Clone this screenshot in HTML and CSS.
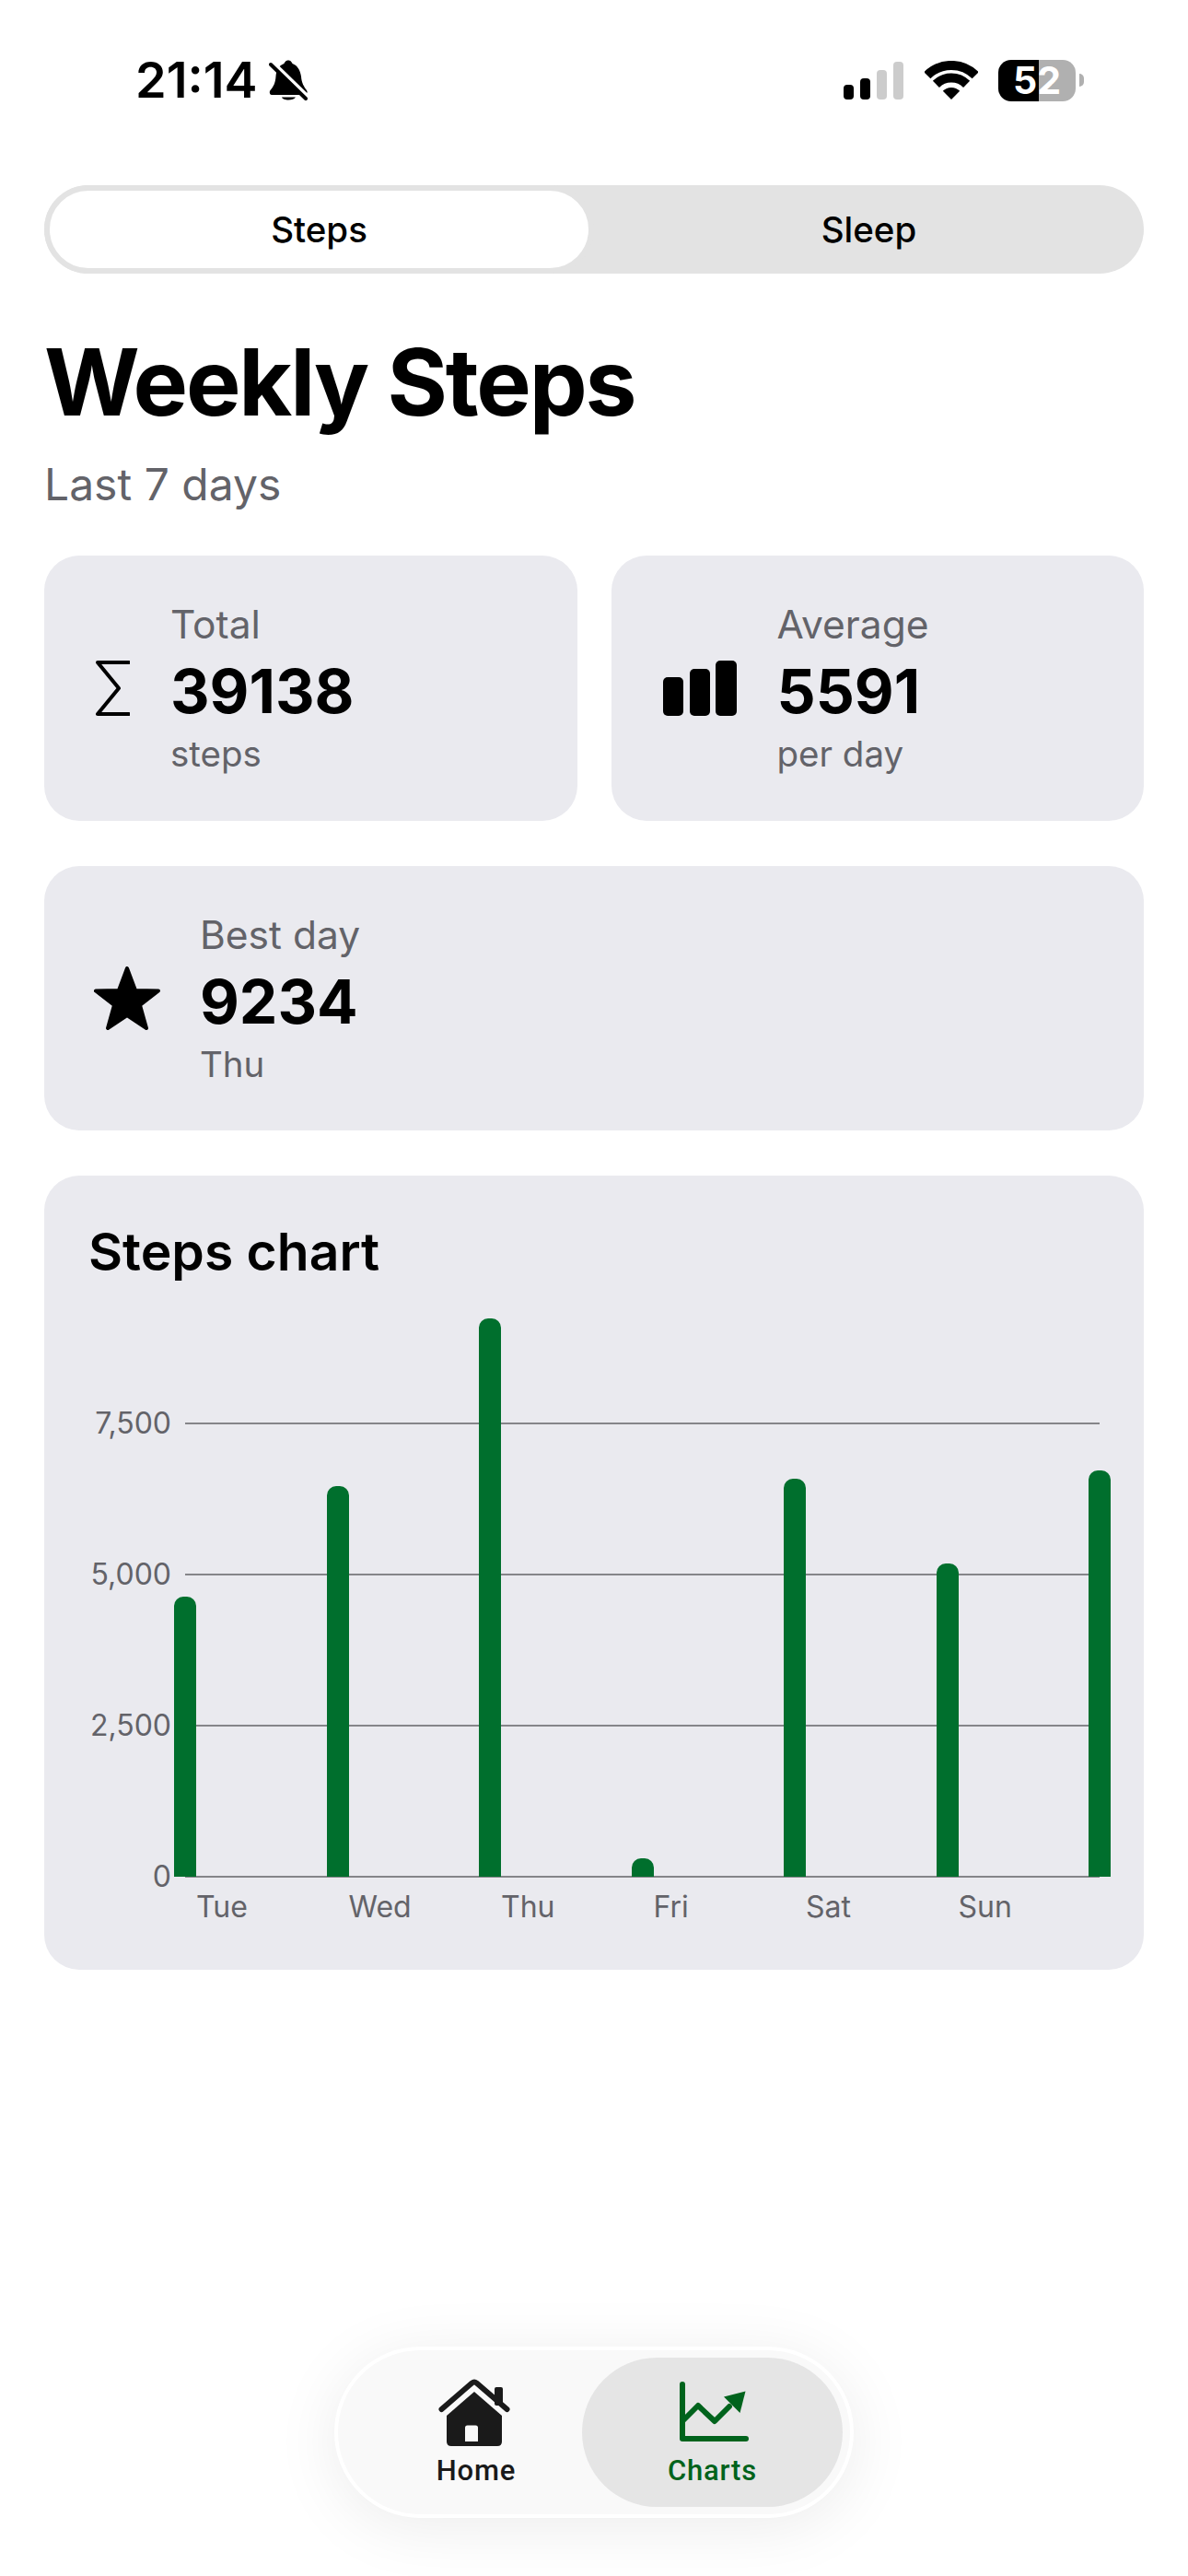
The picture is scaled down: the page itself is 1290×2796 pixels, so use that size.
FILE: index.html
```html
<!DOCTYPE html>
<html lang="en">
<head>
    <meta charset="UTF-8">
    <meta name="viewport" content="width=device-width, initial-scale=1.0">
    <title>Weekly Steps</title>
    <link rel="stylesheet" href="styles.css">
</head>
<body>
    <header class="status">
        <span class="time">21:14</span>
        <svg class="bell" viewBox="0 0 42 46">
            <path d="M21 1.5C24 1.5 25 4 25.5 5C31 7 34 12 35 19C35.5 26 38 30 41 34C42.5 36 41 39 39 39L3 39C1 39 0 36 1.5 34C5 30 7 26 7.5 19C8 12 11 7 16.5 5C17 4 18 1.5 21 1.5Z"/>
            <path d="M14 41.5C15 45.5 27 45.5 29 41.5Z"/>
            <path class="bell-gap" d="M4 4L42 41"/>
            <path class="bell-slash" d="M2 6L40 43"/>
        </svg>
        <div class="status-right">
            <div class="signal">
                <i class="sig sig-1"></i>
                <i class="sig sig-2"></i>
                <i class="sig sig-3 off"></i>
                <i class="sig sig-4 off"></i>
            </div>
            <svg class="wifi" viewBox="0 0 58 42">
                <path class="wifi-arc" d="M2.8 15.8A37 37 0 0 1 55.2 15.8"/>
                <path class="wifi-arc" d="M12.4 25.4A23.5 23.5 0 0 1 45.6 25.4"/>
                <path d="M29 42L19.8 32.8A13 13 0 0 1 38.2 32.8Z"/>
            </svg>
            <div class="battery"><span>52</span></div>
            <i class="battery-cap"></i>
        </div>
    </header>

    <main class="content">
        <div class="segments">
            <div class="segment selected">Steps</div>
            <div class="segment">Sleep</div>
        </div>

        <h1 class="title">Weekly Steps</h1>
        <p class="subtitle">Last 7 days</p>

        <div class="stat-row">
            <div class="card stat">
                <svg class="icon-sigma" viewBox="0 0 37 60">
                    <path d="M36 2L2 2L25 30L2 58L36 58"/>
                </svg>
                <div class="stat-text">
                    <div class="stat-label">Total</div>
                    <div class="stat-value">39138</div>
                    <div class="stat-sub">steps</div>
                </div>
            </div>
            <div class="card stat">
                <svg class="icon-bars" viewBox="0 0 80 60">
                    <rect x="0" y="18" width="22" height="42" rx="5"/>
                    <rect x="29" y="9" width="22" height="51" rx="5"/>
                    <rect x="57" y="0" width="23" height="60" rx="5"/>
                </svg>
                <div class="stat-text">
                    <div class="stat-label">Average</div>
                    <div class="stat-value">5591</div>
                    <div class="stat-sub">per day</div>
                </div>
            </div>
        </div>

        <div class="card stat best">
            <svg class="icon-star" viewBox="0 0 72 69">
                <path d="M36 2L45 26L70 26.500L50 42L57 67L36 53L15 67L22 42L2 26.500L27 26Z"/>
            </svg>
            <div class="stat-text">
                <div class="stat-label">Best day</div>
                <div class="stat-value">9234</div>
                <div class="stat-sub">Thu</div>
            </div>
        </div>

        <section class="card chart">
            <h2 class="chart-title">Steps chart</h2>
            <div class="plot">
                <div class="gridline" style="--v:7500"><span>7,500</span></div>
                <div class="gridline" style="--v:5000"><span>5,000</span></div>
                <div class="gridline" style="--v:2500"><span>2,500</span></div>
                <div class="gridline" style="--v:0"><span>0</span></div>
                <div class="bars">
                    <div class="bar" style="--v:4640"></div>
                    <div class="bar" style="--v:6470"></div>
                    <div class="bar" style="--v:9234"></div>
                    <div class="bar" style="--v:310"></div>
                    <div class="bar" style="--v:6580"></div>
                    <div class="bar" style="--v:5180"></div>
                    <div class="bar" style="--v:6724"></div>
                </div>
            </div>
            <div class="days">
                <span>Tue</span>
                <span>Wed</span>
                <span>Thu</span>
                <span>Fri</span>
                <span>Sat</span>
                <span>Sun</span>
            </div>
        </section>
    </main>

    <nav class="tabbar">
        <a class="tab tab-home">
            <svg class="tab-icon" viewBox="0 0 84 76">
                <rect x="64" y="10" width="9" height="20" rx="2"/>
                <path class="home-roof" d="M6.500 34L39.500 5.500Q42 3.500 44.500 5.500L77.500 34"/>
                <path d="M42 15L72 41L72 69Q72 74 67 74L17 74Q12 74 12 69L12 41Z"/>
                <path class="home-door" d="M32 54Q32 51.500 34.500 51.500L43.500 51.500Q46 51.500 46 54L46 69L32 69Z"/>
            </svg>
            <span class="tab-label">Home</span>
        </a>
        <a class="tab tab-charts active">
            <svg class="tab-icon" viewBox="0 0 84 76">
                <path class="chart-axis" d="M9 7L9 66L78 66"/>
                <path class="chart-axis" d="M10 46L26 30L44 47L60 31"/>
                <path d="M54 20.500L77.500 14.500L71.500 38Z"/>
            </svg>
            <span class="tab-label">Charts</span>
        </a>
    </nav>
</body>
</html>
```

FILE: styles.css
```css
* {
    box-sizing: border-box;
}

body {
    margin: 0;
    height: 2796px;
    overflow: hidden;
    display: flex;
    flex-direction: column;
    background: #fff;
    font-family: Inter, "Liberation Sans", sans-serif;
    color: #000;
}

/* status bar */
.status {
    display: flex;
    align-items: center;
    height: 110px;
    padding: 64px 113px 0 147px;
}

.time {
    font-size: 54px;
    line-height: 46px;
    font-weight: 600;
}

.bell {
    width: 42px;
    height: 46px;
    margin-left: 12px;
}

.bell-gap {
    fill: none;
    stroke: #fff;
    stroke-width: 5;
}

.bell-slash {
    fill: none;
    stroke: #000;
    stroke-width: 4;
    stroke-linecap: round;
}

.status-right {
    display: flex;
    align-items: center;
    margin-left: auto;
}

.signal {
    display: flex;
    align-items: flex-end;
    gap: 7px;
    height: 42px;
    margin-right: 23px;
}

.sig {
    width: 11px;
    border-radius: 4px;
    background: #000;
}

.sig.off {
    background: #ccc;
}

.sig-1 { height: 16px; }
.sig-2 { height: 23px; }
.sig-3 { height: 32px; }
.sig-4 { height: 41px; }

.wifi {
    width: 58px;
    height: 42px;
    margin-right: 22px;
}

.wifi-arc {
    fill: none;
    stroke: #000;
    stroke-width: 10;
}

.battery {
    width: 84px;
    height: 45px;
    border-radius: 14px;
    background: linear-gradient(90deg, #000 44px, #b0b0b0 44px);
    color: #fff;
    font-size: 41px;
    font-weight: 700;
    line-height: 45px;
    text-align: center;
}

.battery-cap {
    width: 5px;
    height: 14px;
    margin-left: 4px;
    border-radius: 0 5px 5px 0;
    background: #b0b0b0;
}

/* page content */
.content {
    padding: 91px 48px 0;
}

.segments {
    display: flex;
    height: 96px;
    border-radius: 48px;
    background: #e3e3e3;
}

.segment {
    flex: 1;
    display: flex;
    align-items: center;
    justify-content: center;
    font-size: 38.500px;
    font-weight: 500;
}

.segment.selected {
    flex: 0 0 597px;
    border: 6px solid #e3e3e3;
    border-radius: 48px;
    background: #fff;
}

.title {
    margin: 58px 0 0;
    font-size: 100px;
    line-height: 120px;
    font-weight: 700;
    letter-spacing: -2.200px;
}

.subtitle {
    margin: 21px 0 47px;
    font-size: 48px;
    line-height: 60px;
    color: #636369;
}

.card {
    border-radius: 38px;
    background: #eaeaef;
}

.stat-row {
    display: flex;
    gap: 37px;
}

.stat {
    flex: 1;
    display: flex;
    align-items: center;
    gap: 44px;
    height: 288px;
    padding-left: 56px;
}

.best {
    height: 287px;
    margin-top: 49px;
}

.stat-label {
    font-size: 42.500px;
    line-height: 52px;
    color: #636369;
}

.stat-value {
    margin: 8px 0 6px;
    font-size: 66px;
    line-height: 76px;
    font-weight: 700;
}

.stat-sub {
    font-size: 38.500px;
    line-height: 48px;
    color: #636369;
}

.icon-sigma {
    width: 37px;
    height: 60px;
    fill: none;
    stroke: #000;
    stroke-width: 4;
    stroke-linecap: round;
    stroke-linejoin: round;
}

.icon-bars {
    width: 80px;
    height: 60px;
}

.icon-star {
    width: 72px;
    height: 69px;
    margin: 0 -1px 0 -2px;
    stroke: #000;
    stroke-width: 4;
    stroke-linejoin: round;
}

/* chart */
.chart {
    margin-top: 49px;
    padding: 48px 0 48px;
}

.chart-title {
    margin: 0 0 37px 48px;
    font-size: 57px;
    line-height: 70px;
    font-weight: 600;
}

.plot {
    position: relative;
    height: 606px;
    margin: 0 48px 0 153px;
}

.gridline {
    position: absolute;
    left: 0;
    right: 0;
    bottom: calc(var(--v) * 0.0656px - 1px);
    height: 2px;
    background: #858589;
}

.gridline span {
    position: absolute;
    right: calc(100% + 15px);
    top: -19px;
    font-size: 32px;
    line-height: 40px;
    color: #636369;
}

.bars {
    position: relative;
    display: flex;
    align-items: flex-end;
    justify-content: space-between;
    height: 100%;
    margin: 0 -12px;
}

.bar {
    width: 24px;
    height: calc(var(--v) * 0.0656px);
    border-radius: 10px 10px 0 0;
    background: #006f2d;
}

.days {
    display: grid;
    grid-template-columns: repeat(6, 165.500px);
    margin: 13px 0 0 165px;
    font-size: 32px;
    line-height: 40px;
    color: #636369;
}

/* floating tab bar */
.tabbar {
    display: flex;
    justify-content: flex-end;
    width: 564px;
    height: 186px;
    margin: auto auto 63px;
    padding: 8px;
    border: 4px solid #fff;
    border-radius: 93px;
    background: #f9f9f9;
    box-shadow: 0 10px 70px rgba(0, 0, 0, 0.08);
}

.tab {
    display: flex;
    flex-direction: column;
    align-items: center;
    padding-top: 22px;
    border-radius: 81px;
    color: #1a1a1a;
}

.tab-home {
    width: 230px;
}

.tab-home .tab-icon {
    margin-right: 4px;
}

.tab-charts {
    width: 283px;
}

.tab.active {
    background: #e5e5e5;
    color: #00631c;
}

.tab-icon {
    width: 84px;
    height: 76px;
    fill: currentColor;
}

.home-roof {
    fill: none;
    stroke: currentColor;
    stroke-width: 6;
    stroke-linecap: round;
}

.home-door {
    fill: #f9f9f9;
}

.chart-axis {
    fill: none;
    stroke: currentColor;
    stroke-width: 6;
    stroke-linecap: round;
    stroke-linejoin: round;
}

.tab-label {
    margin-top: 7px;
    font-family: Roboto, Inter, sans-serif;
    font-size: 31px;
    line-height: 36px;
    font-weight: 500;
    letter-spacing: 0.800px;
}
```
